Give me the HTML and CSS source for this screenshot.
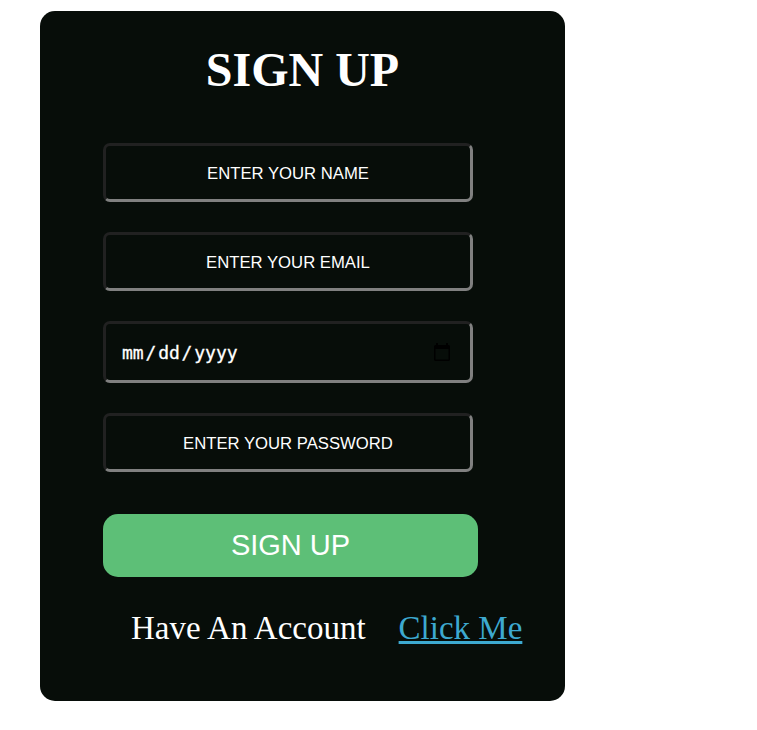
FILE: index.html
```html
<!DOCTYPE html>
<html lang="en">
<head>
<meta charset="utf-8">
<title>Sign Up</title>
<link rel="stylesheet" href="styles.css">
</head>
<body>
<main class="card">
  <h1 class="title">SIGN UP</h1>
  <form class="form">
    <input class="field" type="text" placeholder="ENTER YOUR NAME">
    <input class="field" type="text" placeholder="ENTER YOUR EMAIL">
    <div class="field date"><span class="date-text">mm<span class="slash">/</span>dd<span class="slash">/</span>yyyy</span>
      <svg class="calendar" viewBox="0 0 16 18" width="16" height="18"><path fill="#000" fill-rule="evenodd" d="M2 0h2v2h8V0h2v2h1l1 1v14l-1 1H1l-1-1V3l1-1h1zM1.500 6v10.500h13V6z"/></svg>
    </div>
    <input class="field" type="password" placeholder="ENTER YOUR PASSWORD">
    <button class="submit" type="button">SIGN UP</button>
  </form>
  <p class="footer"><span>Have An Account</span><a class="link" href="#">Click Me</a></p>
</main>
</body>
</html>
```
FILE: styles.css
```css
* { box-sizing: border-box; }
body { margin: 0; background: #fff; overflow: hidden; }
.card {
  width: 525px;
  height: 690px;
  margin: 11px 0 0 40px;
  padding: 31px 0 0 63px;
  border-radius: 15px;
  background: #070d09;
  color: #fff;
  font-family: "Liberation Serif", serif;
}
.title { margin: 0 63px 0 0; font-size: 48px; line-height: 56px; text-align: center; }
.form { display: flex; flex-direction: column; margin-top: 45px; }
.field {
  width: 370px;
  height: 59px;
  margin: 0 0 30px;
  padding: 2px 16px 0;
  border: 3px solid;
  border-color: #212121 #808080 #808080 #212121;
  border-radius: 7px;
  background: transparent;
  color: #fff;
  font: 16.700px "Liberation Sans", sans-serif;
  text-align: center;
}
.field::placeholder { color: #fff; opacity: 1; }
.date { display: flex; align-items: center; justify-content: space-between; height: 62px; padding: 0 20px 0 16px; }
.date-text { font: 18px "DejaVu Sans Mono", monospace; -webkit-text-stroke: 0.3px #fff; }
.slash { margin: 0 1.800px; }
.submit {
  width: 375px;
  height: 63px;
  margin-top: 12px;
  padding: 0 0 1px;
  border: 0;
  border-radius: 15px;
  background: #5dbf77;
  color: #fff;
  font: 29px "Liberation Sans", sans-serif;
}
.footer { display: flex; gap: 33px; margin: 32px 0 0 28px; font-size: 33px; line-height: 38px; white-space: nowrap; }
.link { color: #3da9d0; text-decoration: underline; text-decoration-thickness: 3px; text-underline-offset: 2px; }
```
